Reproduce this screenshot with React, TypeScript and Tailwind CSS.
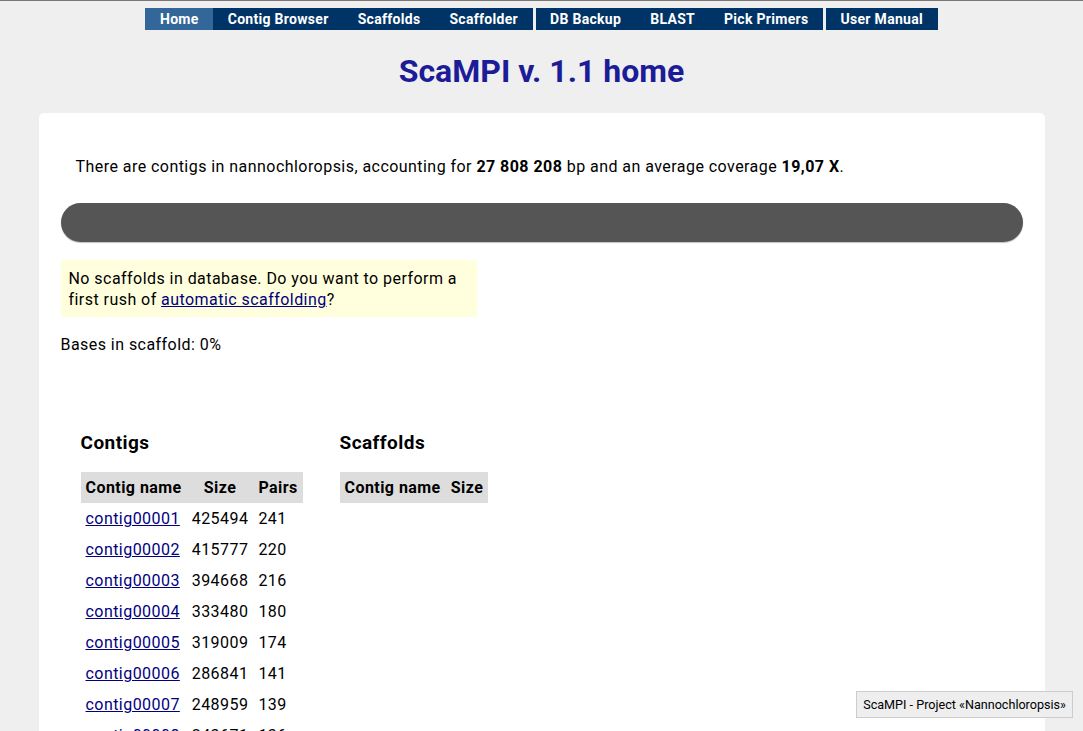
import React from "react";

const font = { fontFamily: "'Roboto Slab', Roboto, 'Noto Sans', sans-serif" };

const navGroups = [
  ["Home", "Contig Browser", "Scaffolds", "Scaffolder"],
  ["DB Backup", "BLAST", "Pick Primers"],
  ["User Manual"],
];

const contigs: [string, number, number][] = [
  ["contig00001", 425494, 241],
  ["contig00002", 415777, 220],
  ["contig00003", 394668, 216],
  ["contig00004", 333480, 180],
  ["contig00005", 319009, 174],
  ["contig00006", 286841, 141],
  ["contig00007", 248959, 139],
  ["contig00008", 243671, 136],
  ["contig00009", 238105, 131],
  ["contig00010", 227412, 127],
];

function Nav() {
  return (
    <div className="flex justify-center pt-[7px]">
      <div className="flex gap-[3px]">
        {navGroups.map((g, gi) => (
          <ul key={gi} className="flex bg-[#003366]">
            {g.map((item) => (
              <li
                key={item}
                className={`h-[22px] px-[14.5px] text-[14px] font-bold leading-[22px] tracking-[0.3px] text-white ${
                  item === "Home" ? "bg-[#336699]" : ""
                }`}
              >
                {item}
              </li>
            ))}
          </ul>
        ))}
      </div>
    </div>
  );
}

export default function App() {
  return (
    <div className="h-screen overflow-hidden border-t border-[#777] bg-[#efefef] text-black" style={font}>
      <Nav />
      <h1 className="mt-[21px] text-center text-[32px] font-bold leading-[40px] text-[#1c1c99]">
        ScaMPI v. 1.1 home
      </h1>

      <div className="mx-auto mt-[22px] min-h-[700px] w-[1006px] rounded-[5px] bg-white px-[22px] pt-[42px] tracking-[0.45px]">
        <p className="pl-[15px] text-[16px] leading-[24px]">
          There are contigs in nannochloropsis, accounting for <b>27 808 208</b> bp and an average
          coverage <b>19,07 X</b>.
        </p>

        <div className="mt-[24px] h-[39px] rounded-full bg-[#555555] shadow-[0_1px_1px_rgba(0,0,0,0.25)]" />

        <div className="mt-[18px] w-[416px] rounded-[3px] bg-[#ffffdd] px-[8px] pb-[7px] pt-[8px] text-[16px] leading-[21px]">
          No scaffolds in database. Do you want to perform a first rush of{" "}
          <a href="#" className="text-[#000080] underline">
            automatic scaffolding
          </a>
          ?
        </div>

        <p className="mt-[17px] text-[16px] leading-[22px]">Bases in scaffold: 0%</p>

        <div className="ml-[20px] mt-[73px] flex">
          <div className="w-[259px]">
            <h2 className="text-[19px] font-bold leading-[28px]">Contigs</h2>
            <table className="mt-[15px] border-collapse text-[16px] leading-[21px]">
              <thead>
                <tr className="bg-[#dddddd]">
                  <th className="px-[5px] py-[5px] text-center font-bold">Contig name</th>
                  <th className="px-[5px] py-[5px] text-center font-bold">Size</th>
                  <th className="px-[5px] py-[5px] text-center font-bold">Pairs</th>
                </tr>
              </thead>
              <tbody>
                {contigs.map(([n, s, p]) => (
                  <tr key={n}>
                    <td className="px-[5px] py-[5px]">
                      <a href="#" className="text-[#000080] underline">
                        {n}
                      </a>
                    </td>
                    <td className="px-[5px] py-[5px]">{s}</td>
                    <td className="px-[5px] py-[5px]">{p}</td>
                  </tr>
                ))}
              </tbody>
            </table>
          </div>
          <div>
            <h2 className="text-[19px] font-bold leading-[28px]">Scaffolds</h2>
            <table className="mt-[15px] border-collapse text-[16px] leading-[21px]">
              <thead>
                <tr className="bg-[#dddddd]">
                  <th className="px-[5px] py-[5px] text-center font-bold">Contig name</th>
                  <th className="px-[5px] py-[5px] text-center font-bold">Size</th>
                </tr>
              </thead>
              <tbody />
            </table>
          </div>
        </div>
      </div>

      <div className="fixed bottom-[13px] right-[10px] border border-[#cccccc] bg-[#eeeeee] px-[6px] py-[4px] text-[12.6px] leading-[17px]">
        ScaMPI - Project «Nannochloropsis»
      </div>
    </div>
  );
}
